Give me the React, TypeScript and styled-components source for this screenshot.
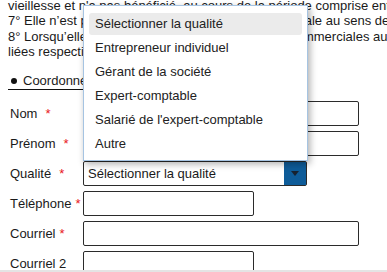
import styled, { createGlobalStyle } from "styled-components";

const GlobalStyle = createGlobalStyle`
  html, body {
    margin: 0;
    padding: 0;
    background: #ffffff;
    overflow: hidden;
  }
  body {
    font-family: "Liberation Sans", Arial, sans-serif;
    font-size: 13px;
    color: #1a1a1a;
  }
`

const introLines = [
  "vieillesse et n'a pas bénéficié, au cours de la période comprise entre le",
  "7° Elle n’est pas liée à l'activité principale commerciale au sens de",
  "8° Lorsqu’elle exerce des activités artisanales et commerciales au sens",
  "liées respectivement aux",
];

const options = [
  "Sélectionner la qualité",
  "Entrepreneur individuel",
  "Gérant de la société",
  "Expert-comptable",
  "Salarié de l'expert-comptable",
  "Autre",
];

interface IField {
  label: string
  required?: boolean
  starGap?: number
  width?: number
  select?: boolean
}

const fields: IField[] = [
  { label: "Nom", required: true, starGap: 8 },
  { label: "Prénom", required: true, starGap: 8 },
  { label: "Qualité", required: true, starGap: 8, select: true },
  { label: "Téléphone", required: true, starGap: 4, width: 171 },
  { label: "Courriel", required: true, starGap: 4 },
  { label: "Courriel 2", width: 171 },
];

export default function App() {
  return (
    <>
      <GlobalStyle />
      <Page>
        <Intro>
          {introLines.map((line) => (
            <IntroLine key={line}>{line}</IntroLine>
          ))}
        </Intro>
        <SectionTitle>
          <Bullet />
          Coordonnées du déclarant
        </SectionTitle>
        <Form>
          {fields.map((f) => (
            <Row key={f.label}>
              <Label>
                {f.label}
                {f.required && <Star $gap={f.starGap ?? 4}>*</Star>}
              </Label>
              {f.select ? (
                <Select>
                  <SelectText>Sélectionner la qualité</SelectText>
                  <SelectButton>
                    <svg width="8" height="5" viewBox="0 0 8 5">
                      <path d="M0 0 H8 L4 5 Z" fill="#172230" />
                    </svg>
                  </SelectButton>
                </Select>
              ) : (
                <Input $width={f.width} />
              )}
            </Row>
          ))}
        </Form>
        <Dropdown>
          {options.map((o, i) => (
            <Option key={o} $active={i === 0}>{o}</Option>
          ))}
        </Dropdown>
      </Page>
      <BottomStrip />
    </>
  );
}

const Page = styled.div`
  position: relative;
  height: 270px;
  padding: 0 8px;
  overflow: hidden;
`
const Intro = styled.div`
  margin-top: -2px;
  line-height: 15.3px;
`
const IntroLine = styled.div`
  white-space: nowrap;
`
const SectionTitle = styled.div`
  display: inline-flex;
  align-items: center;
  margin-top: 14px;
  line-height: 15.3px;
  padding-bottom: 1px;
  border-bottom: 1px solid #111;
`
const Bullet = styled.span`
  width: 6px;
  height: 6px;
  border-radius: 50%;
  background: #111;
  margin: 0 6px 0 3px;
`
const Form = styled.div`
  display: flex;
  flex-direction: column;
  gap: 5px;
  margin-top: 11px;
`
const Row = styled.div`
  display: grid;
  grid-template-columns: 75px auto;
  align-items: center;
`
const Label = styled.div`
  padding-left: 2px;
  white-space: nowrap;
`
const Star = styled.span<{ $gap: number }>`
  color: #e8141c;
  margin-left: ${(p) => p.$gap}px;
`
const Input = styled.div<{ $width?: number }>`
  box-sizing: border-box;
  width: ${(p) => (p.$width ? `${p.$width}px` : "276px")};
  height: 25px;
  border: 1px solid #2b2b2b;
  border-radius: 2px;
  background: #fff;
`
const Select = styled.div`
  box-sizing: border-box;
  width: 224px;
  height: 25px;
  display: flex;
  align-items: stretch;
  border: 1px solid #2b2b2b;
  border-radius: 2px;
  background: #fff;
`
const SelectText = styled.div`
  flex: 1;
  display: flex;
  align-items: center;
  padding-left: 4px;
`
const SelectButton = styled.div`
  width: 22px;
  display: flex;
  align-items: center;
  justify-content: center;
  background: #0e5c99;
`
const Dropdown = styled.div`
  position: absolute;
  left: 83px;
  top: 5px;
  box-sizing: border-box;
  width: 225px;
  height: 156px;
  padding: 7px 5px;
  background: #fff;
  border: 1px solid #a6c4e2;
  box-shadow: 2px 3px 7px rgba(0, 0, 0, 0.32);
  display: flex;
  flex-direction: column;
  gap: 2px;
`
const Option = styled.div<{ $active?: boolean }>`
  height: 22px;
  line-height: 22px;
  padding-left: 6px;
  border-radius: 3px;
  color: #222;
  white-space: nowrap;
  background: ${(p) => (p.$active ? "#ebebeb" : "transparent")};
`
const BottomStrip = styled.div`
  height: 2px;
  background: #e4e4e4;
`
